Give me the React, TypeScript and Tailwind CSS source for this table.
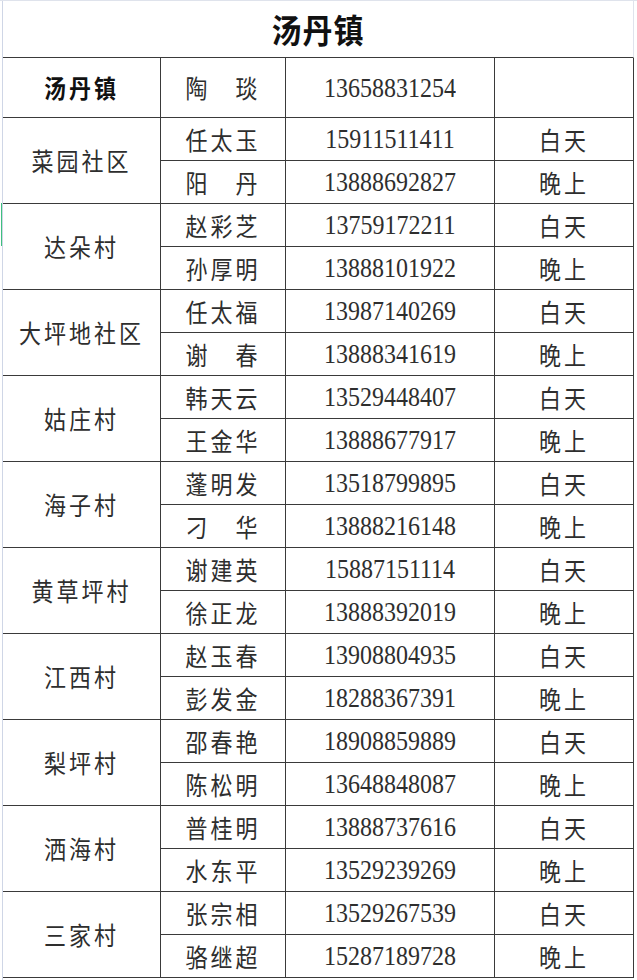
import React from "react";

type Row = { name: string; phone: string; time: string };
type Group = { area: string; rows: Row[] };

const groups: Group[] = [
  { area: "菜园社区", rows: [ { name: "任太玉", phone: "15911511411", time: "白天" }, { name: "阳　丹", phone: "13888692827", time: "晚上" } ] },
  { area: "达朵村", rows: [ { name: "赵彩芝", phone: "13759172211", time: "白天" }, { name: "孙厚明", phone: "13888101922", time: "晚上" } ] },
  { area: "大坪地社区", rows: [ { name: "任太福", phone: "13987140269", time: "白天" }, { name: "谢　春", phone: "13888341619", time: "晚上" } ] },
  { area: "姑庄村", rows: [ { name: "韩天云", phone: "13529448407", time: "白天" }, { name: "王金华", phone: "13888677917", time: "晚上" } ] },
  { area: "海子村", rows: [ { name: "蓬明发", phone: "13518799895", time: "白天" }, { name: "刁　华", phone: "13888216148", time: "晚上" } ] },
  { area: "黄草坪村", rows: [ { name: "谢建英", phone: "15887151114", time: "白天" }, { name: "徐正龙", phone: "13888392019", time: "晚上" } ] },
  { area: "江西村", rows: [ { name: "赵玉春", phone: "13908804935", time: "白天" }, { name: "彭发金", phone: "18288367391", time: "晚上" } ] },
  { area: "梨坪村", rows: [ { name: "邵春艳", phone: "18908859889", time: "白天" }, { name: "陈松明", phone: "13648848087", time: "晚上" } ] },
  { area: "洒海村", rows: [ { name: "普桂明", phone: "13888737616", time: "白天" }, { name: "水东平", phone: "13529239269", time: "晚上" } ] },
  { area: "三家村", rows: [ { name: "张宗相", phone: "13529267539", time: "白天" }, { name: "骆继超", phone: "15287189728", time: "晚上" } ] },
];

const cjk = "font-['Noto_Sans_CJK_SC',sans-serif]";
const num = "font-['Liberation_Serif',serif]";
const cell = "flex items-center justify-center border-r border-b border-[#3a3a3a] text-[#2e2e2e]";

function T({ children }: { children: React.ReactNode }) {
  return <span className="inline-block scale-y-[1.12]">{children}</span>;
}

export default function App() {
  return (
    <div className="w-[637px] h-[980px] bg-white flex border-t border-[#dfe3ec] overflow-hidden">
      <div className="relative w-[3px] h-full border-r border-[#cfd6e6] bg-white shrink-0">
        <div className="absolute left-[1px] top-[202px] w-[1px] h-[43px] bg-[#3fbf7f]" />
      </div>
      <div className="grid grid-cols-[158px_125px_209px_139px] grid-rows-[57px_60px_repeat(20,43px)] w-[631px] shrink-0">
        <div className={`col-span-4 flex items-center justify-center border-b border-[#3a3a3a] border-r border-r-[#dfe3ec] text-[30px] font-bold text-[#111] ${cjk}`}>
          <span className="inline-block scale-y-[1.1] tracking-[1px]">汤丹镇</span>
        </div>
        <div className={`${cell} ${cjk} text-[22px] font-bold tracking-[3px] text-[#111]`}><T>汤丹镇</T></div>
        <div className={`${cell} ${cjk} text-[22px] tracking-[3px]`}><T>陶　琰</T></div>
        <div className={`${cell} ${num} text-[24px]`}><T>13658831254</T></div>
        <div className={`${cell}`} />
        {groups.map((g) => (
          <React.Fragment key={g.area}>
            <div className={`${cell} row-span-2 ${cjk} text-[22px] tracking-[3px]`}><T>{g.area}</T></div>
            {g.rows.map((r, i) => (
              <React.Fragment key={i}>
                <div className={`${cell} ${cjk} text-[22px] tracking-[3px] ${i === 1 ? "col-start-2" : ""}`}><T>{r.name}</T></div>
                <div className={`${cell} ${num} text-[24px]`}><T>{r.phone}</T></div>
                <div className={`${cell} ${cjk} text-[22px] tracking-[3px]`}><T>{r.time}</T></div>
              </React.Fragment>
            ))}
          </React.Fragment>
        ))}
      </div>
      <div className="w-[3px] h-full bg-white shrink-0" />
    </div>
  );
}
